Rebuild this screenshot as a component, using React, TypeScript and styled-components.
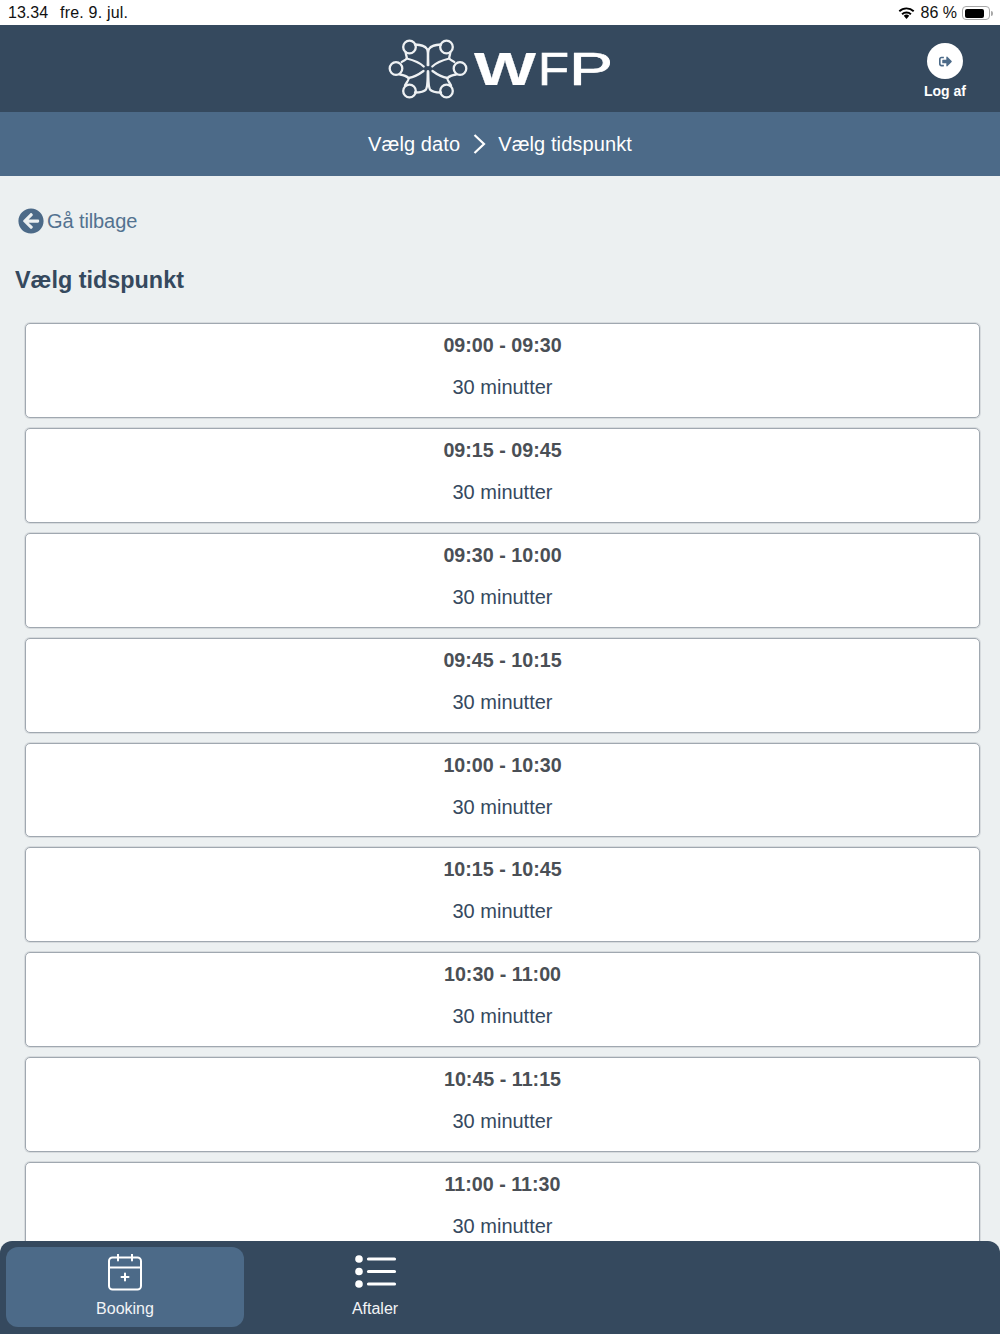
import styled, { createGlobalStyle } from "styled-components";
import { FaArrowCircleLeft, FaSignOutAlt } from "react-icons/fa";

const GlobalStyle = createGlobalStyle`
  html, body {
    margin: 0;
    padding: 0;
    background: #ecf0f1;
    font-family: "Liberation Sans", Arial, sans-serif;
  }
`;

const Page = styled.div`
  position: relative;
  width: 1000px;
  height: 1334px;
  overflow: hidden;
  background: #ecf0f1;
`;

const StatusBar = styled.div`
  height: 25px;
  box-sizing: border-box;
  padding: 1px 6px 0 8px;
  background: #fff;
  color: #111;
  font-size: 16px;
  display: flex;
  align-items: center;
  justify-content: space-between;
`;

const StatusLeft = styled.div`
  display: flex;
  gap: 12px;
`;

const StatusDate = styled.span`
  letter-spacing: 0.2px;
`;

const StatusRight = styled.div`
  display: flex;
  align-items: center;
  gap: 5px;
`;

const Wifi = styled.svg`
  width: 17px;
  height: 12px;
  margin-right: 1px;
`;

const Battery = styled.div`
  width: 28px;
  height: 14px;
  box-sizing: border-box;
  border: 1px solid #a8a8a8;
  border-radius: 4px;
  padding: 1.5px;
  margin-right: 4px;
  position: relative;
  &::before {
    content: "";
    display: block;
    width: 86%;
    height: 100%;
    background: #000;
    border-radius: 2px;
  }
  &::after {
    content: "";
    position: absolute;
    top: 4px;
    right: -4px;
    width: 2px;
    height: 5px;
    background: #a8a8a8;
    border-radius: 0 2px 2px 0;
  }
`;

const Header = styled.header`
  height: 87px;
  background: #35495e;
  display: flex;
  align-items: center;
  justify-content: center;
  position: relative;
`;

const Logo = styled.svg`
  width: 240px;
  height: 87px;
  text {
    font-family: "Liberation Sans", Arial, sans-serif;
  }
`;

const Logout = styled.div`
  position: absolute;
  top: 18px;
  right: 34px;
  display: flex;
  flex-direction: column;
  align-items: center;
  gap: 4px;
  color: #fff;
  font-size: 14px;
  font-weight: 700;
`;

const LogoutCircle = styled.div`
  width: 36px;
  height: 36px;
  border-radius: 50%;
  background: #fff;
  color: #4c6a88;
  display: flex;
  align-items: center;
  justify-content: center;
  font-size: 13px;
`;

const Steps = styled.nav`
  height: 64px;
  background: #4c6a88;
  color: #fff;
  font-size: 20px;
  letter-spacing: 0.1px;
  display: flex;
  align-items: center;
  justify-content: center;
  gap: 11px;
`;

const Content = styled.main`
  padding: 31px 20px 0 15px;
`;

const BackLink = styled.div`
  display: flex;
  align-items: center;
  gap: 3px;
  height: 28px;
  margin-left: 3px;
  color: #537290;
  font-size: 20px;
  letter-spacing: -0.1px;
  svg {
    font-size: 26px;
    color: #4c6a88;
  }
`;

const Title = styled.h1`
  margin: 29px 0 27px;
  color: #35495e;
  font-size: 23.4px;
  line-height: 32px;
  font-weight: 700;
`;

const SlotList = styled.div`
  display: flex;
  flex-direction: column;
  gap: 10px;
  margin-left: 10px;
`;

const Slot = styled.div`
  height: 94.9px;
  box-sizing: border-box;
  background: #fff;
  border: 1px solid #a0a8b0;
  box-shadow: 0 0 0 1px rgba(165, 172, 179, 0.3);
  border-radius: 5px;
  text-align: center;
  padding-top: 9px;
`;

const SlotTime = styled.div`
  color: #4a4f55;
  font-size: 19.7px;
  font-weight: 700;
  line-height: 24px;
`;

const SlotLength = styled.div`
  color: #35495e;
  font-size: 20px;
  line-height: 24px;
  margin-top: 18px;
`;

const TabBar = styled.footer`
  position: absolute;
  left: 0;
  right: 0;
  bottom: 0;
  height: 93px;
  box-sizing: border-box;
  padding: 6px 6px 7px;
  background: #35495e;
  border-radius: 12px 12px 0 0;
  display: flex;
  gap: 12px;
`;

const Tab = styled.div<{ $active?: boolean }>`
  width: 238px;
  border-radius: 12px;
  background: ${(p) => (p.$active ? "#4c6a88" : "transparent")};
  color: #f2f4f6;
  font-size: 16px;
  display: flex;
  flex-direction: column;
  align-items: center;
  padding-top: 7px;
  box-sizing: border-box;
  gap: 8px;
`;

const TabIcon = styled.svg`
  width: 44px;
  height: 38px;
  display: block;
`;

const times = [
  "09:00 - 09:30",
  "09:15 - 09:45",
  "09:30 - 10:00",
  "09:45 - 10:15",
  "10:00 - 10:30",
  "10:15 - 10:45",
  "10:30 - 11:00",
  "10:45 - 11:15",
  "11:00 - 11:30",
];

const WifiIcon = () => (
  <Wifi viewBox="0 0 18 13">
    <path d="M9 13 6 9.6a4.4 4.4 0 0 1 6 0z" fill="#000" />
    <path d="M4.2 7.8a7 7 0 0 1 9.6 0M1.2 4.6a11.4 11.4 0 0 1 15.6 0" fill="none" stroke="#000" strokeWidth="2.1" />
  </Wifi>
);

const LogoHalf = () => (
  <>
    <circle cx="409.5" cy="47" r="6.3" />
    <circle cx="396" cy="68.5" r="6.3" />
    <circle cx="409.5" cy="91" r="6.3" />
    <path d="M415 44.5c6 .5 10 1 12 4.5 1.5 3 1 10 1.3 16" />
    <path d="M405.7 52.5c.2 3 1.5 4.5 1 6-.5 1.5-3.5 2-5 3.5" />
    <path d="M406.7 58.5c6 1.5 13 4 17 8" />
    <path d="M400 74.5c3 .5 7 2 8.5 3.5 1 1.5-2.5 5-3.5 7.5" />
    <path d="M408.5 78c6-1 11-4 15-7" />
    <path d="M415 92.5c5 0 9-.5 11-3 2-3.500 1.500-11 1.800-18" />
  </>
);

const LogoMark = () => (
  <g fill="none" stroke="#eef1f3" strokeWidth="2.3" strokeLinecap="round">
    <LogoHalf />
    <g transform="matrix(-1 0 0 1 856 0)">
      <LogoHalf />
    </g>
  </g>
);

export default function App() {
  return (
    <Page>
      <GlobalStyle />
      <StatusBar>
        <StatusLeft>
          <span>13.34</span>
          <StatusDate>fre. 9. jul.</StatusDate>
        </StatusLeft>
        <StatusRight>
          <WifiIcon />
          <span>86 %</span>
          <Battery />
        </StatusRight>
      </StatusBar>
      <Header>
        <Logo viewBox="380 25 240 87">
          <LogoMark />
          <g fill="#fff" stroke="#fff" fontSize="46">
            <text x="474" y="85" strokeWidth="0.2" fontWeight="700" textLength="62" lengthAdjust="spacingAndGlyphs">
              W
            </text>
            <text x="538" y="85" strokeWidth="0.7" textLength="31" lengthAdjust="spacingAndGlyphs">
              F
            </text>
            <text x="569" y="85" strokeWidth="0.7" textLength="44" lengthAdjust="spacingAndGlyphs">
              P
            </text>
          </g>
        </Logo>
        <Logout>
          <LogoutCircle>
            <FaSignOutAlt />
          </LogoutCircle>
          Log af
        </Logout>
      </Header>
      <Steps>
        <span>Vælg dato</span>
        <svg width="16" height="22" viewBox="0 0 16 22">
          <path d="M3.500 2 13 11l-9.500 9" fill="none" stroke="#fff" strokeWidth="2.2" />
        </svg>
        <span>Vælg tidspunkt</span>
      </Steps>
      <Content>
        <BackLink>
          <FaArrowCircleLeft />
          Gå tilbage
        </BackLink>
        <Title>Vælg tidspunkt</Title>
        <SlotList>
          {times.map((t) => (
            <Slot key={t}>
              <SlotTime>{t}</SlotTime>
              <SlotLength>30 minutter</SlotLength>
            </Slot>
          ))}
        </SlotList>
      </Content>
      <TabBar>
        <Tab $active>
          <TabIcon viewBox="0 0 44 38">
            <g fill="none" stroke="#fff" strokeWidth="2" strokeLinecap="round">
              <rect x="6" y="3.5" width="32" height="32" rx="3.5" />
              <path d="M6 13.500h32M15 0.500v6M29 0.500v6M22 19.500v7M18.500 23h7" />
            </g>
          </TabIcon>
          Booking
        </Tab>
        <Tab>
          <TabIcon viewBox="0 0 44 38">
            <g fill="#fff">
              <circle cx="6" cy="5" r="3.8" />
              <circle cx="6" cy="17.500" r="3.8" />
              <circle cx="6" cy="30" r="3.8" />
            </g>
            <path d="M15.500 5h26M15.500 17.500h26M15.500 30h26" stroke="#fff" strokeWidth="3.200" strokeLinecap="round" />
          </TabIcon>
          Aftaler
        </Tab>
      </TabBar>
    </Page>
  );
}
